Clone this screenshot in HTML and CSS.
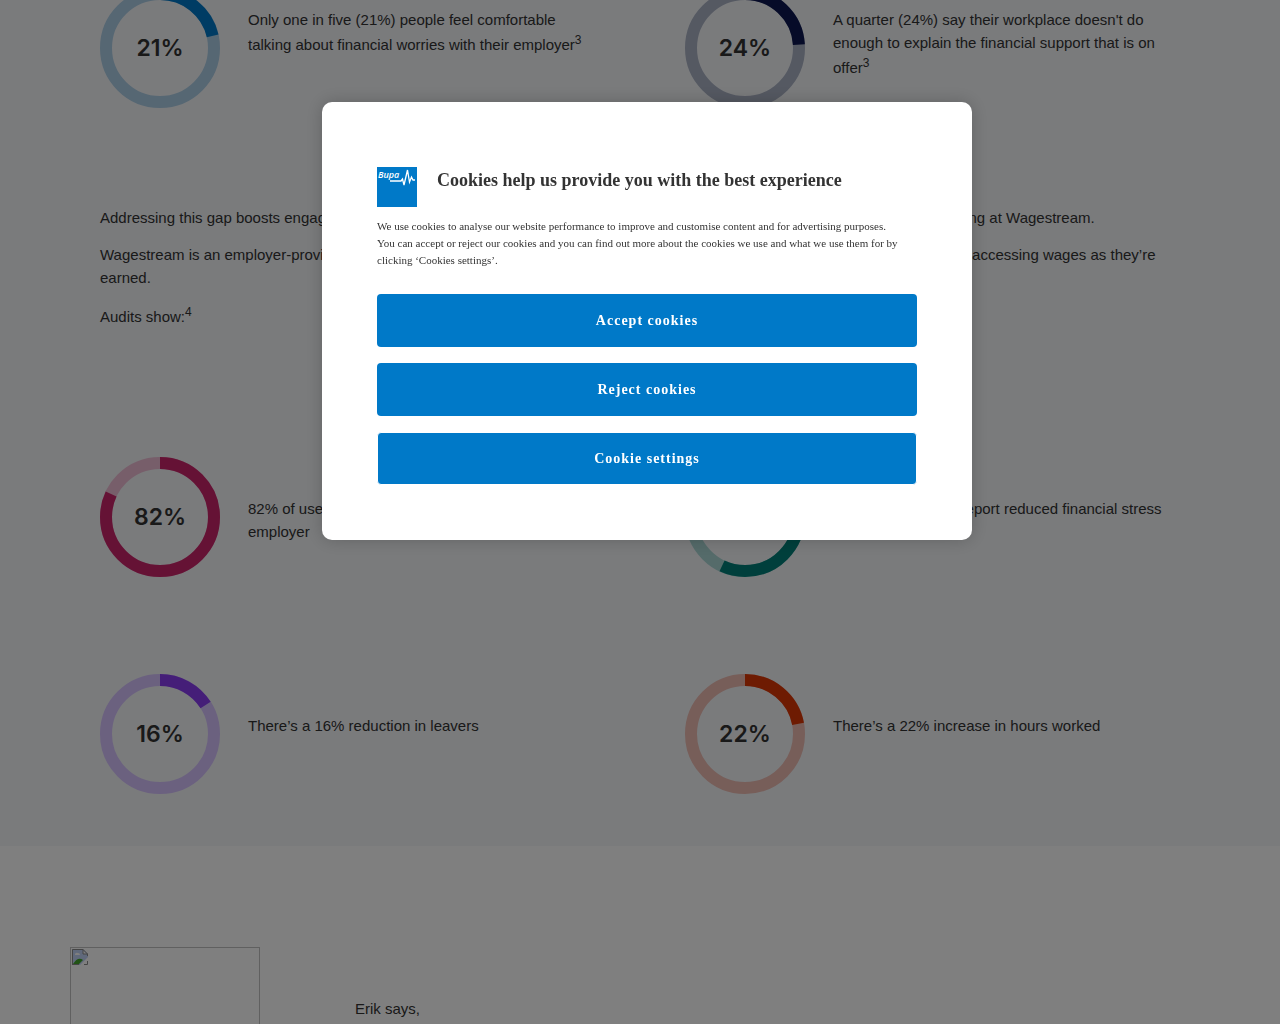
FILE: index.html
```html
<!DOCTYPE html>
<html lang="en">
<head>
<meta charset="utf-8">
<title>Financial wellbeing at work</title>
<link rel="stylesheet" href="styles.css">
</head>
<body>
<main>
  <section class="insights">
    <div class="stats stats-first">
      <div class="stat">
        <svg class="ring blue" viewBox="0 0 120 120"><circle class="track" cx="60" cy="60" r="54"/><circle class="arc" cx="60" cy="60" r="54" pathLength="100" stroke-dasharray="21.4 100"/><text x="60" y="68">21%</text></svg>
        <p>Only one in five (21%) people feel comfortable talking about financial worries with their employer<sup>3</sup></p>
      </div>
      <div class="stat">
        <svg class="ring navy" viewBox="0 0 120 120"><circle class="track" cx="60" cy="60" r="54"/><circle class="arc" cx="60" cy="60" r="54" pathLength="100" stroke-dasharray="24 100"/><text x="60" y="68">24%</text></svg>
        <p>A quarter (24%) say their workplace doesn't do enough to explain the financial support that is on offer<sup>3</sup></p>
      </div>
    </div>
    <div class="copy">
      <p>Addressing this gap boosts engagement, productivity and higher retention, says Erik Porter, Director of Employee Financial Wellbeing at Wagestream.</p>
      <p>Wagestream is an employer-provided financial wellbeing platform that gives employees much more control over their pay, including accessing wages as they’re earned.</p>
      <p>Audits show:<sup>4</sup></p>
    </div>
    <div class="stats">
      <div class="stat">
        <svg class="ring pink" viewBox="0 0 120 120"><circle class="track" cx="60" cy="60" r="54"/><circle class="arc" cx="60" cy="60" r="54" pathLength="100" stroke-dasharray="82 100"/><text x="60" y="68">82%</text></svg>
        <p>82% of users have a more positive view of their employer</p>
      </div>
      <div class="stat">
        <svg class="ring teal" viewBox="0 0 120 120"><circle class="track" cx="60" cy="60" r="54"/><circle class="arc" cx="60" cy="60" r="54" pathLength="100" stroke-dasharray="57 100"/><text x="60" y="68">57%</text></svg>
        <p>57% of employees report reduced financial stress</p>
      </div>
      <div class="stat">
        <svg class="ring purple" viewBox="0 0 120 120"><circle class="track" cx="60" cy="60" r="54"/><circle class="arc" cx="60" cy="60" r="54" pathLength="100" stroke-dasharray="16 100"/><text x="60" y="68">16%</text></svg>
        <p>There’s a 16% reduction in leavers</p>
      </div>
      <div class="stat">
        <svg class="ring orange" viewBox="0 0 120 120"><circle class="track" cx="60" cy="60" r="54"/><circle class="arc" cx="60" cy="60" r="54" pathLength="100" stroke-dasharray="22 100"/><text x="60" y="68">22%</text></svg>
        <p>There’s a 22% increase in hours worked</p>
      </div>
    </div>
  </section>
  <section class="quote">
    <div class="portrait">
      <svg class="broken" viewBox="0 0 16 16">
        <path d="M0 0H11L16 5V8L8 16H0Z" fill="#c1d2f6"/>
        <path d="M3 6a2 2 0 0 1 3-2 2 2 0 0 1 2 2Z" fill="#fff"/>
        <path d="M1 15Q6 7 11 11L7 15Z" fill="#42a62a"/>
        <path d="M11 1V5H15Z" fill="#fff"/>
        <path d="M.5 15.500V.5H11L15.500 5V7M0 15.500H7M11 .5V5H15.500M12 15.500H15.500V12" fill="none" stroke="#8a8a8a"/>
      </svg>
    </div>
    <p>Erik says,</p>
  </section>
</main>
<div class="overlay">
  <div class="dialog" role="dialog" aria-modal="true" aria-labelledby="cookie-title">
    <header>
      <svg class="logo" viewBox="0 0 40 40" role="img" aria-label="Bupa">
        <rect width="40" height="40" fill="#0079c8"/>
        <text x="1" y="11">Bupa</text>
        <path d="M13 14H24L25.500 12L27 18L30.500 3L32.500 15L34.500 10L36 13H38" fill="none" stroke="#fff" stroke-width="1.300"/>
      </svg>
      <h2 id="cookie-title">Cookies help us provide you with the best experience</h2>
    </header>
    <p>We use cookies to analyse our website performance to improve and customise content and for advertising purposes. You can accept or reject our cookies and you can find out more about the cookies we use and what we use them for by clicking ‘Cookies settings’.</p>
    <div class="actions">
      <button type="button">Accept cookies</button>
      <button type="button">Reject cookies</button>
      <button type="button" class="settings">Cookie settings</button>
    </div>
  </div>
</div>
</body>
</html>
```
FILE: styles.css
```css
* { box-sizing: border-box; }
body {
  margin: 0;
  height: 100vh;
  overflow: hidden;
  background: #fff;
  color: #333;
  font: 15px/23px "Liberation Sans", Arial, sans-serif;
}
p { margin: 0; }
sup { font-size: 12px; line-height: 19px; }
.insights {
  display: flow-root;
  padding: 0 100px 52px;
  background: #f4f6f9;
}
.stats {
  display: grid;
  grid-template-columns: 1fr 1fr;
  gap: 97px 90px;
}
.stats-first { margin-top: -12px; }
.stat {
  display: grid;
  grid-template-columns: 120px 1fr;
  column-gap: 28px;
}
.stat p { padding-top: 40px; }
.stats-first p { padding-top: 20px; }
.ring { width: 120px; height: 120px; }
.ring circle { fill: none; stroke-width: 12; }
.ring .arc { transform: rotate(-90deg); transform-origin: 60px 60px; }
.ring text {
  fill: #333;
  font: 600 23px Inter, sans-serif;
  text-anchor: middle;
}
.blue .track { stroke: #accee6; }
.blue .arc { stroke: #0079c8; }
.navy .track { stroke: #aab2c4; }
.navy .arc { stroke: #0c1650; }
.pink .track { stroke: #efbcd4; }
.pink .arc { stroke: #cb246a; }
.teal .track { stroke: #aad6d4; }
.teal .arc { stroke: #007f78; }
.purple .track { stroke: #d6c2ff; }
.purple .arc { stroke: #8a3cf0; }
.orange .track { stroke: #eebcb2; }
.orange .arc { stroke: #dc3604; }
.copy {
  display: grid;
  gap: 14px;
  padding: 98px 0 129px;
}
.quote {
  display: grid;
  grid-template-columns: 190px 1fr;
  column-gap: 95px;
  padding: 101px 70px;
}
.quote p { padding-top: 50px; }
.portrait {
  height: 190px;
  padding: 1px;
  border: 1px solid #c0c0c0;
}
.broken { display: block; width: 16px; height: 16px; }
.overlay {
  position: fixed;
  inset: 0;
  display: flex;
  justify-content: center;
  align-items: flex-start;
  padding: 102px 0 0 14px;
  background: rgba(0, 0, 0, 0.5);
}
.dialog {
  width: 650px;
  padding: 65px 55px 55px;
  border-radius: 10px;
  background: #fff;
  box-shadow: 0 0 18px rgba(0, 0, 0, 0.2);
  font-family: "Liberation Serif", "Times New Roman", serif;
}
.dialog header { display: flex; gap: 20px; }
.logo { width: 40px; height: 40px; }
.logo text {
  fill: #fff;
  font: italic 600 9px "Open Sans", sans-serif;
}
.dialog h2 {
  margin: 0;
  font-size: 18px;
  line-height: 26px;
}
.dialog p {
  margin-top: 11px;
  padding-right: 15px;
  font-size: 11px;
  line-height: 17px;
}
.actions {
  display: grid;
  gap: 16px;
  margin-top: 25px;
}
.actions button {
  height: 53px;
  border: 0;
  border-radius: 4px;
  background: #0079c8;
  color: #fff;
  font: 700 14px "Liberation Serif", "Times New Roman", serif;
  letter-spacing: 1px;
}
.actions .settings { border: 1px solid #fff; }
```
